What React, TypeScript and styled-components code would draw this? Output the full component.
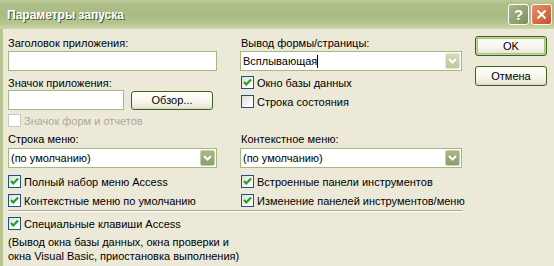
import React from "react";
import styled, { createGlobalStyle } from "styled-components";

const GlobalStyle = createGlobalStyle`
  html, body {
    margin: 0;
    padding: 0;
    background: #ece9d8;
  }
  body {
    font-family: "Liberation Sans", Arial, sans-serif;
    font-size: 11px;
    color: #000;
  }
`;

const Window = styled.div`
  width: 554px;
  height: 266px;
  overflow: hidden;
  display: flex;
  flex-direction: column;
  background: #ece9d8;
`;

const TitleBar = styled.div`
  height: 29px;
  flex: none;
  box-sizing: border-box;
  display: flex;
  align-items: center;
  gap: 2px;
  padding: 0 2px 0 7px;
  background: linear-gradient(
    to bottom,
    #bccb97 0%,
    #afbf8a 15%,
    #a9ba84 50%,
    #b6c592 82%,
    #cdd8a8 100%
  );
`;

const Title = styled.div`
  flex: 1;
  color: #fff;
  font: bold 12px "Liberation Sans", Arial, sans-serif;
  text-shadow: 1px 1px 0 #4a5a2a;
  padding-top: 1px;
`;

const CaptionButton = styled.div<{ $kind: "help" | "close" }>`
  width: 21px;
  height: 21px;
  box-sizing: border-box;
  border: 1px solid #fff;
  border-radius: 3px;
  display: flex;
  align-items: center;
  justify-content: center;
  color: #fff;
  font: bold 15px "Liberation Sans", Arial, sans-serif;
  background: ${(p) =>
    p.$kind === "help"
      ? "linear-gradient(135deg, #a9b78a, #7f905c)"
      : "linear-gradient(135deg, #e8906a, #c8502b)"};
`;

const Frame = styled.div`
  flex: 1;
  display: flex;
  border-left: 3px solid #b7c593;
  padding: 0 0 0 5px;
`;

const Main = styled.div`
  width: 455px;
  display: flex;
  flex-direction: column;
`;

const Columns = styled.div`
  display: grid;
  grid-template-columns: 209px 222px;
  column-gap: 23px;
`;

const Column = styled.div`
  display: flex;
  flex-direction: column;
  align-items: flex-start;
`;

const Label = styled.div<{ $top: number; $indent?: boolean }>`
  height: 13px;
  line-height: 13px;
  white-space: nowrap;
  margin-top: ${(p) => p.$top}px;
  padding-left: ${(p) => (p.$indent ? 1 : 0)}px;
`;

const TextBox = styled.div<{ $width: number; $top: number }>`
  width: ${(p) => p.$width}px;
  height: 20px;
  box-sizing: border-box;
  border: 1px solid #a5b97f;
  background: #fff;
  margin-top: ${(p) => p.$top}px;
  display: flex;
  align-items: center;
  padding: 0 1px 0 2px;
  white-space: nowrap;
`;

const BoxText = styled.span`
  flex: 1;
  line-height: 13px;
`;

const Caret = styled.span`
  display: inline-block;
  width: 1px;
  height: 13px;
  background: #000;
  vertical-align: top;
`;

const DropButton = styled.div<{ $hot?: boolean }>`
  width: 15px;
  height: 16px;
  box-sizing: border-box;
  border: 1px solid ${(p) => (p.$hot ? "#e4ead2" : "#c6cfb0")};
  border-radius: 2px;
  background: ${(p) =>
    p.$hot
      ? "linear-gradient(#d3dcb6, #bcc898)"
      : "linear-gradient(#a9b787, #8e9d6c)"};
  display: flex;
  align-items: center;
  justify-content: center;
`;

const Row = styled.div<{ $top: number }>`
  display: flex;
  align-items: center;
  gap: 7px;
  margin-top: ${(p) => p.$top}px;
`;

const Button = styled.button<{ $default?: boolean; $width: number; $height: number }>`
  width: ${(p) => p.$width}px;
  height: ${(p) => p.$height}px;
  box-sizing: border-box;
  border: 1px solid #3c621e;
  border-radius: 3px;
  padding: 0;
  background: linear-gradient(#fffffb, #f6f4ec 60%, #e6e2d2);
  box-shadow: ${(p) =>
    p.$default
      ? "inset 0 0 0 1px #c1d59c, inset 0 0 0 2px #a8c47e"
      : "inset 0 -1px 0 #dcd7c6"};
  font: 11px "Liberation Sans", Arial, sans-serif;
  color: #000;
`;

const CheckRow = styled.label<{ $top: number; $disabled?: boolean }>`
  display: flex;
  align-items: center;
  gap: 3px;
  height: 13px;
  margin-top: ${(p) => p.$top}px;
  white-space: nowrap;
  color: ${(p) => (p.$disabled ? "#aca899" : "#000")};
`;

const Box = styled.span<{ $disabled?: boolean }>`
  width: 13px;
  height: 13px;
  box-sizing: border-box;
  flex: none;
  border: 1px solid ${(p) => (p.$disabled ? "#cac8bb" : "#1c5180")};
  background: ${(p) =>
    p.$disabled ? "#fff" : "linear-gradient(135deg, #dcdcd6, #fff 80%)"};
  display: flex;
`;

const CheckGroup = styled.div`
  padding-left: 1px;
`;

const Separator = styled.div`
  height: 0;
  border-top: 1px solid #aca899;
  border-bottom: 1px solid #fff;
  margin-top: 3px;
`;

const Note = styled.div`
  line-height: 14px;
  margin-top: 5px;
`;

const Buttons = styled.div`
  display: flex;
  flex-direction: column;
  gap: 10px;
  margin: 7px 0 0 12px;
`;

const Chevron = () => (
  <svg width="9" height="6" viewBox="0 0 9 6">
    <path d="M1 1 L4.5 4.5 L8 1" fill="none" stroke="#fff" strokeWidth="2" />
  </svg>
);

const Tick = () => (
  <svg width="11" height="11" viewBox="0 0 11 11">
    <path d="M2 5 L4.3 7.5 L9 2.5" fill="none" stroke="#21a121" strokeWidth="2.2" />
  </svg>
);

const CheckBox: React.FC<{
  label: string;
  checked?: boolean;
  disabled?: boolean;
  top: number;
}> = ({ label, checked, disabled, top }) => (
  <CheckRow $top={top} $disabled={disabled}>
    <Box $disabled={disabled}>{checked && <Tick />}</Box>
    <span>{label}</span>
  </CheckRow>
);

const Combo: React.FC<{
  width: number;
  top: number;
  hot?: boolean;
  children: React.ReactNode;
}> = ({ width, top, hot, children }) => (
  <TextBox $width={width} $top={top}>
    <BoxText>{children}</BoxText>
    <DropButton $hot={hot}>
      <Chevron />
    </DropButton>
  </TextBox>
);

const App: React.FC = () => {
  return (
    <Window>
      <GlobalStyle />
      <TitleBar>
        <Title>Параметры запуска</Title>
        <CaptionButton $kind="help">?</CaptionButton>
        <CaptionButton $kind="close">
          <svg width="11" height="11" viewBox="0 0 11 11">
            <path d="M1.5 1.5 L9.5 9.5 M9.5 1.5 L1.5 9.5" stroke="#fff" strokeWidth="2" />
          </svg>
        </CaptionButton>
      </TitleBar>
      <Frame>
        <Main>
          <Columns>
            <Column>
              <Label $top={8}>Заголовок приложения:</Label>
              <TextBox $width={209} $top={1} />
              <Label $top={6}>Значок приложения:</Label>
              <Row $top={0}>
                <TextBox $width={116} $top={0} />
                <Button $width={82} $height={19}>
                  Обзор...
                </Button>
              </Row>
              <CheckBox top={4} disabled label="Значок форм и отчетов" />
            </Column>
            <Column>
              <Label $top={8} $indent>
                Вывод формы/страницы:
              </Label>
              <Combo width={222} top={1} hot>
                Всплывающая
                <Caret />
              </Combo>
              <CheckGroup>
                <CheckBox top={5} checked label="Окно базы данных" />
                <CheckBox top={6} label="Строка состояния" />
              </CheckGroup>
            </Column>
          </Columns>
          <Columns>
            <Column>
              <Label $top={6}>Строка меню:</Label>
              <Combo width={209} top={2}>
                (по умолчанию)
              </Combo>
              <CheckBox top={7} checked label="Полный набор меню Access" />
              <CheckBox top={6} checked label="Контекстные меню по умолчанию" />
            </Column>
            <Column>
              <Label $top={6} $indent>
                Контекстное меню:
              </Label>
              <Combo width={222} top={2}>
                (по умолчанию)
              </Combo>
              <CheckGroup>
                <CheckBox top={7} checked label="Встроенные панели инструментов" />
                <CheckBox top={6} checked label="Изменение панелей инструментов/меню" />
              </CheckGroup>
            </Column>
          </Columns>
          <Separator />
          <CheckBox top={5} checked label="Специальные клавиши Access" />
          <Note>
            (Вывод окна базы данных, окна проверки и
            <br />
            окна Visual Basic, приостановка выполнения)
          </Note>
        </Main>
        <Buttons>
          <Button $default $width={72} $height={20}>
            OK
          </Button>
          <Button $width={72} $height={20}>
            Отмена
          </Button>
        </Buttons>
      </Frame>
    </Window>
  );
};

export default App;
